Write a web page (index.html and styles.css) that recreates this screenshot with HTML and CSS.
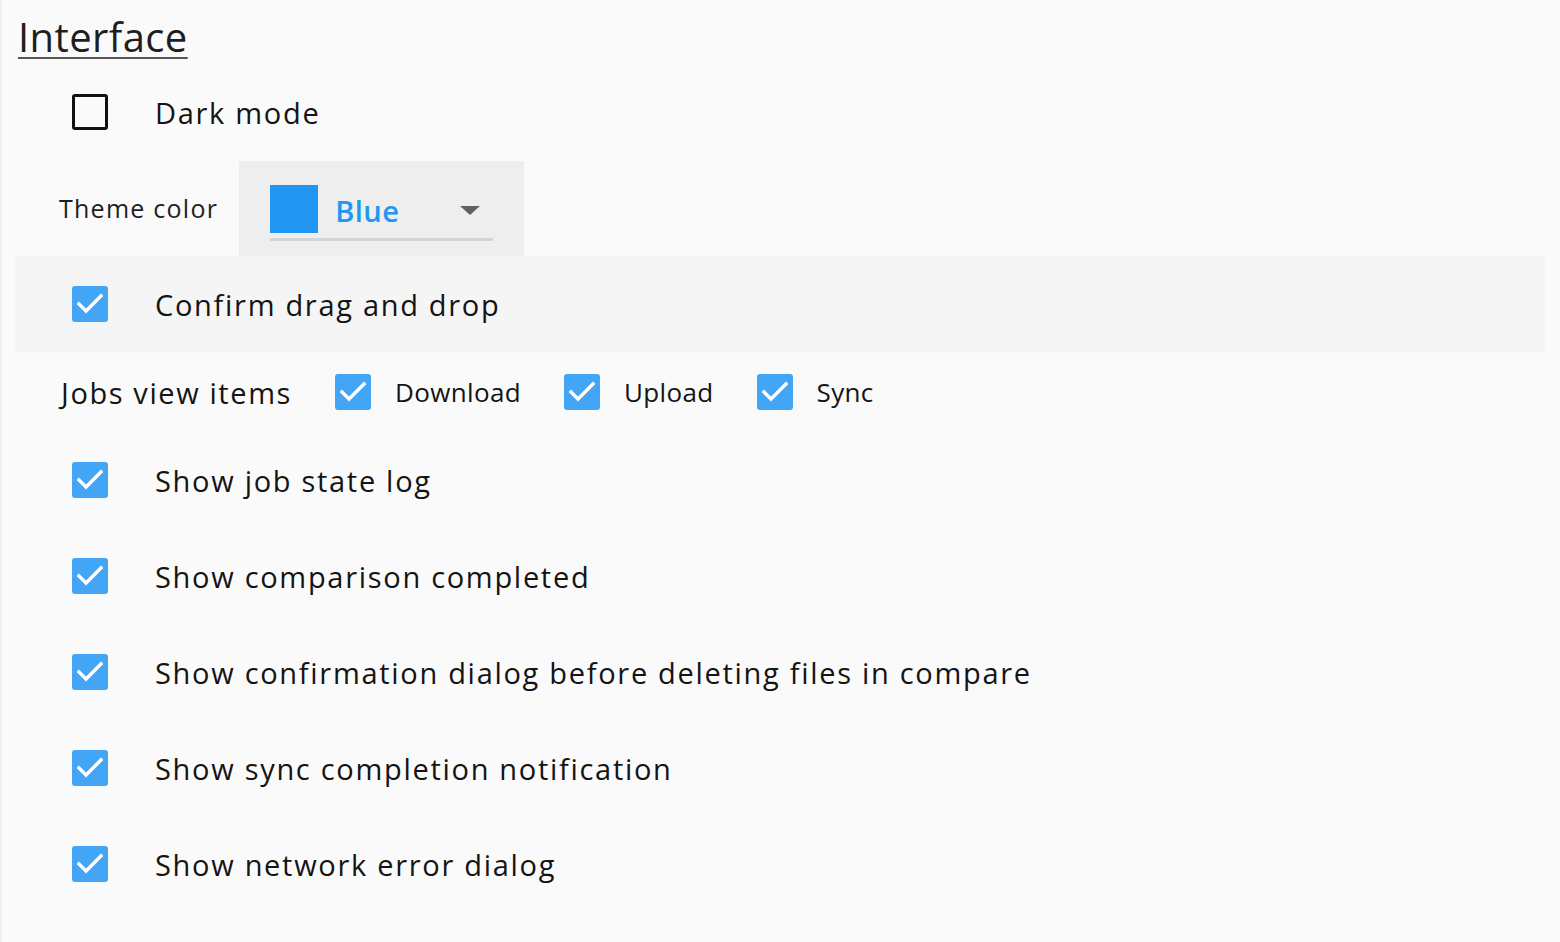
FILE: index.html
```html
<!DOCTYPE html>
<html lang="en">
<head>
<meta charset="utf-8">
<title>Interface settings</title>
<link rel="stylesheet" href="styles.css">
</head>
<body>
<div class="page">
  <h1 class="title">Interface</h1>

  <div class="row">
    <span class="cb"></span>
    <span class="label">Dark mode</span>
  </div>

  <div class="theme-row">
    <span class="small-label">Theme color</span>
    <div class="select">
      <div class="select-inner">
        <span class="swatch"></span>
        <span class="select-text">Blue</span>
        <span class="arrow"></span>
      </div>
    </div>
  </div>

  <div class="row row-hover">
    <span class="cb cb-on"><svg viewBox="0 0 36 36"><polyline points="7,18 14,25 29,10"/></svg></span>
    <span class="label">Confirm drag and drop</span>
  </div>

  <div class="jobs-row">
    <span class="jobs-label">Jobs view items</span>
    <span class="cb cb-on"><svg viewBox="0 0 36 36"><polyline points="7,18 14,25 29,10"/></svg></span>
    <span class="sub-label">Download</span>
    <span class="cb cb-on"><svg viewBox="0 0 36 36"><polyline points="7,18 14,25 29,10"/></svg></span>
    <span class="sub-label">Upload</span>
    <span class="cb cb-on"><svg viewBox="0 0 36 36"><polyline points="7,18 14,25 29,10"/></svg></span>
    <span class="sub-label">Sync</span>
  </div>

  <div class="row">
    <span class="cb cb-on"><svg viewBox="0 0 36 36"><polyline points="7,18 14,25 29,10"/></svg></span>
    <span class="label">Show job state log</span>
  </div>
  <div class="row">
    <span class="cb cb-on"><svg viewBox="0 0 36 36"><polyline points="7,18 14,25 29,10"/></svg></span>
    <span class="label">Show comparison completed</span>
  </div>
  <div class="row">
    <span class="cb cb-on"><svg viewBox="0 0 36 36"><polyline points="7,18 14,25 29,10"/></svg></span>
    <span class="label">Show confirmation dialog before deleting files in compare</span>
  </div>
  <div class="row">
    <span class="cb cb-on"><svg viewBox="0 0 36 36"><polyline points="7,18 14,25 29,10"/></svg></span>
    <span class="label">Show sync completion notification</span>
  </div>
  <div class="row">
    <span class="cb cb-on"><svg viewBox="0 0 36 36"><polyline points="7,18 14,25 29,10"/></svg></span>
    <span class="label">Show network error dialog</span>
  </div>
</div>
</body>
</html>
```

FILE: styles.css
```css
html, body {
  margin: 0;
  padding: 0;
  background: #fafafa;
}
body {
  font-family: "Open Sans", "Noto Sans", "Liberation Sans", sans-serif;
  color: #141414;
  height: 942px;
  overflow: hidden;
  border-left: 2px solid #f0f0f0;
  box-sizing: border-box;
}
.page {
  padding: 0 15px 0 13px;
}
.title {
  margin: 0;
  height: 64px;
  box-sizing: border-box;
  padding: 15px 0 0 3px;
  font-size: 40px;
  font-weight: 400;
  line-height: 44px;
  letter-spacing: 0.4px;
  color: #1e1e1e;
  text-decoration: underline;
  text-decoration-thickness: 2px;
  text-underline-offset: 5px;
  text-decoration-color: #555;
}
.row {
  display: flex;
  align-items: center;
  height: 96px;
  padding-left: 57px;
  gap: 47px;
}
.row-hover {
  background: #f5f5f5;
}
.label {
  font-size: 29px;
  letter-spacing: 1.7px;
  color: #141414;
}
.cb {
  flex: none;
  width: 36px;
  height: 36px;
  box-sizing: border-box;
  border: 3px solid #111;
  border-radius: 3px;
  display: flex;
}
.cb-on {
  border: none;
  background: #42a5f5;
}
.cb svg {
  width: 36px;
  height: 36px;
}
.cb polyline {
  fill: none;
  stroke: #fff;
  stroke-width: 3.4;
  stroke-linecap: square;
}
.theme-row {
  display: flex;
  align-items: center;
  height: 96px;
  padding-left: 44px;
  gap: 21px;
}
.small-label {
  font-size: 25px;
  letter-spacing: 1.25px;
  color: #1e1e1e;
}
.select {
  background: #eeeeee;
  width: 285px;
  height: 95px;
  box-sizing: border-box;
  padding: 24px 0 0 31px;
}
.select-inner {
  width: 223px;
  height: 56px;
  border-bottom: 3px solid #d4d4d4;
  display: flex;
  align-items: flex-start;
  box-sizing: border-box;
}
.swatch {
  width: 48px;
  height: 48px;
  background: #2196f3;
  flex: none;
}
.select-text {
  font-size: 29px;
  font-weight: 600;
  letter-spacing: 0.5px;
  color: #2196f3;
  margin-left: 17px;
  line-height: 52px;
}
.arrow {
  margin-left: 60px;
  margin-top: 21px;
  width: 0;
  height: 0;
  border-left: 10px solid transparent;
  border-right: 10px solid transparent;
  border-top: 9px solid #616161;
}
.jobs-row {
  display: flex;
  align-items: center;
  height: 80px;
  padding-left: 46px;
}
.jobs-label {
  font-size: 29px;
  letter-spacing: 1.6px;
  margin-right: 43px;
}
.sub-label {
  font-size: 26px;
  letter-spacing: 0.35px;
  margin-left: 24px;
  margin-right: 43px;
}
```
